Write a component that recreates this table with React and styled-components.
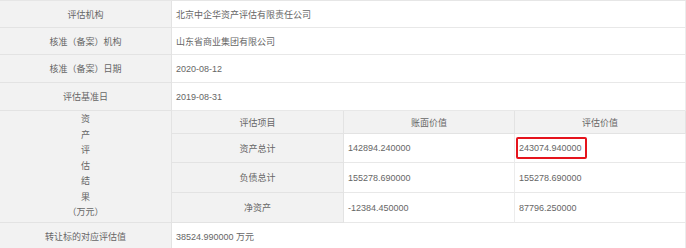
import React from "react";
import styled, { createGlobalStyle } from "styled-components";

const GlobalStyle = createGlobalStyle`
  html, body {
    margin: 0;
    padding: 0;
    background: #ffffff;
  }
  body {
    font-family: "Liberation Sans", "Noto Sans CJK SC", sans-serif;
    font-size: 9px;
    color: #666666;
  }
`;

const Table = styled.div`
  display: grid;
  grid-template-columns: 172px 1fr;
  width: 686px;
  border-top: 1px solid #e6e6e6;
  box-sizing: border-box;
`;

const Label = styled.div`
  height: ${(props) => props.h}px;
  box-sizing: border-box;
  display: flex;
  align-items: center;
  justify-content: center;
  background: #f2f2f2;
  border-bottom: 1px solid #e3e3e3;
  border-right: 1px solid #e3e3e3;
`;

const Value = styled.div`
  height: ${(props) => props.h}px;
  box-sizing: border-box;
  display: flex;
  align-items: center;
  padding-left: 4px;
  background: #ffffff;
  border-bottom: 1px solid #e8e8e8;
  border-right: 1px solid #ececec;
`;

const VerticalLabel = styled(Label)`
  flex-direction: column;
  line-height: 15.5px;
  height: auto;
`;

const SubTable = styled.div`
  display: grid;
  grid-template-columns: 172px 171px 1fr;
`;

const SubHead = styled.div`
  height: ${(props) => props.h}px;
  box-sizing: border-box;
  display: flex;
  align-items: center;
  justify-content: center;
  background: #f2f2f2;
  border-bottom: 1px solid #e3e3e3;
  border-right: 1px solid #e3e3e3;
`;

const Mark = styled.span`
  margin-left: -3px;
  padding: 1px 3px 1px 1px;
  line-height: 16px;
  border: 2px solid #e5141d;
  border-radius: 2px;
`;

const info = [
  ["评估机构", "北京中企华资产评估有限责任公司", 27],
  ["核准（备案）机构", "山东省商业集团有限公司", 27],
  ["核准（备案）日期", "2020-08-12", 28],
  ["评估基准日", "2019-08-31", 28],
];

const results = [
  ["资产总计", "142894.240000", "243074.940000", 29, true],
  ["负债总计", "155278.690000", "155278.690000", 30],
  ["净资产", "-12384.450000", "87796.250000", 30],
];

export default function App() {
  return (
    <>
      <GlobalStyle />
      <Table>
        {info.map(([name, value, h]) => (
          <React.Fragment key={name}>
            <Label h={h}>{name}</Label>
            <Value h={h}>{value}</Value>
          </React.Fragment>
        ))}

        <VerticalLabel>
          <span>资</span>
          <span>产</span>
          <span>评</span>
          <span>估</span>
          <span>结</span>
          <span>果</span>
          <span>（万元）</span>
        </VerticalLabel>
        <SubTable>
          <SubHead h={23}>评估项目</SubHead>
          <SubHead h={23}>账面价值</SubHead>
          <SubHead h={23}>评估价值</SubHead>
          {results.map(([name, book, appraised, h, marked]) => (
            <React.Fragment key={name}>
              <SubHead h={h}>{name}</SubHead>
              <Value h={h}>{book}</Value>
              <Value h={h}>{marked ? <Mark>{appraised}</Mark> : appraised}</Value>
            </React.Fragment>
          ))}
        </SubTable>

        <Label h={27}>转让标的对应评估值</Label>
        <Value h={27}>38524.990000 万元</Value>
      </Table>
    </>
  );
}
